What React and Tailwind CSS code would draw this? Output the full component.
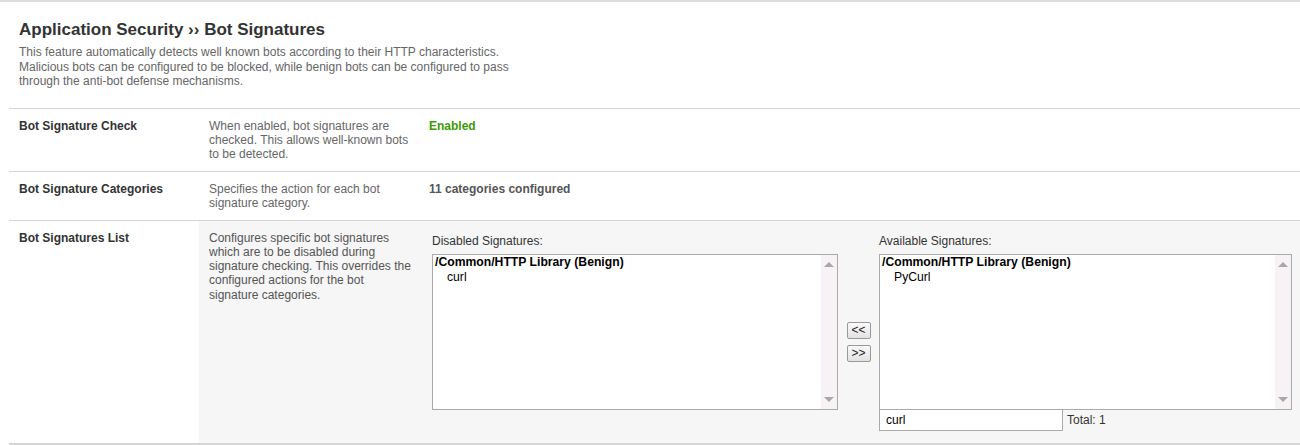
import React from "react";

const rows = [
  {
    label: "Bot Signature Check",
    desc: "When enabled, bot signatures are checked. This allows well-known bots to be detected.",
    value: <span className="font-bold text-[#3b9c05]">Enabled</span>,
    height: "h-[63px]",
  },
  {
    label: "Bot Signature Categories",
    desc: "Specifies the action for each bot signature category.",
    value: <span className="font-bold text-[#555]">11 categories configured</span>,
    height: "h-[49px]",
  },
];

const ScrollTrack = () => (
  <div className="flex w-[16px] shrink-0 flex-col items-center justify-between bg-[#f6f2f6] py-[7px]">
    <div className="h-0 w-0 border-x-[5px] border-b-[5px] border-x-transparent border-b-[#a8a8a8]" />
    <div className="h-0 w-0 border-x-[5px] border-t-[5px] border-x-transparent border-t-[#a8a8a8]" />
  </div>
);

const SignatureList = ({ label, item, width }) => (
  <div className={`flex flex-col ${width}`}>
    <div className="h-[33px] pt-[13px] text-[12px] leading-[14px] text-[#333]">{label}</div>
    <div className="flex h-[156px] border border-[#aaa] bg-white">
      <div className="flex-1 pl-[2px] text-[12.2px] leading-[15px] text-black">
        <div className="font-bold">/Common/HTTP Library (Benign)</div>
        <div className="pl-[12px]">{item}</div>
      </div>
      <ScrollTrack />
    </div>
  </div>
);

const MoveButton = ({ children }) => (
  <button className="h-[17px] w-[24px] rounded-[2px] border border-[#999] bg-gradient-to-b from-[#fafafa] to-[#e2e2e2] text-[12px] leading-[13px] text-[#222]">
    {children}
  </button>
);

export default function App() {
  return (
    <div className="min-h-[445px] border-t-2 border-[#dcdcdc] bg-white font-['Liberation_Sans',Arial,sans-serif]">
      <div className="px-[19px] pt-[18px] pb-[19px]">
        <h1 className="text-[17px] font-bold leading-[20px] text-[#333]">
          Application Security ›› Bot Signatures
        </h1>
        <p className="mt-[5px] w-[500px] text-[12px] leading-[14.5px] text-[#666]">
          This feature automatically detects well known bots according to their HTTP characteristics.
          Malicious bots can be configured to be blocked, while benign bots can be configured to pass
          through the anti-bot defense mechanisms.
        </p>
      </div>

      <div className="ml-[9px] border-t border-[#d4d4d4]">
        {rows.map((row) => (
          <div key={row.label} className={`flex border-b border-[#d4d4d4] ${row.height}`}>
            <div className="w-[190px] shrink-0 pl-[10px] pt-[10px] text-[12px] font-bold leading-[14px] text-[#333]">
              {row.label}
            </div>
            <div className="w-[220px] shrink-0 px-[10px] pt-[10px] text-[12px] leading-[14px] text-[#666]">
              {row.desc}
            </div>
            <div className="pl-[10px] pt-[10px] text-[12px] leading-[14px]">{row.value}</div>
          </div>
        ))}

        <div className="flex h-[224px] border-b-2 border-[#d4d4d4]">
          <div className="w-[190px] shrink-0 pl-[10px] pt-[10px] text-[12px] font-bold leading-[14px] text-[#333]">
            Bot Signatures List
          </div>
          <div className="flex flex-1 bg-[#f6f6f6]">
            <div className="w-[220px] shrink-0 pl-[10px] pr-[4px] pt-[10px] text-[12px] leading-[14.3px] text-[#555]">
              Configures specific bot signatures which are to be disabled during signature checking. This
              overrides the configured actions for the bot signature categories.
            </div>
            <div className="flex pl-[13px]">
              <SignatureList label="Disabled Signatures:" item="curl" width="w-[406px]" />
              <div className="flex w-[41px] flex-col items-center gap-[6px] pt-[101px]">
                <MoveButton>&lt;&lt;</MoveButton>
                <MoveButton>&gt;&gt;</MoveButton>
              </div>
              <div className="flex flex-col">
                <SignatureList label="Available Signatures:" item="PyCurl" width="w-[413px]" />
                <div className="flex items-center">
                  <input
                    readOnly
                    value="curl"
                    className="h-[21px] w-[184px] border border-t-0 border-[#aaa] bg-white px-[6px] text-[12px] text-black outline-none"
                  />
                  <span className="ml-[4px] text-[12px] text-[#333]">Total: 1</span>
                </div>
              </div>
            </div>
          </div>
        </div>
      </div>
    </div>
  );
}
